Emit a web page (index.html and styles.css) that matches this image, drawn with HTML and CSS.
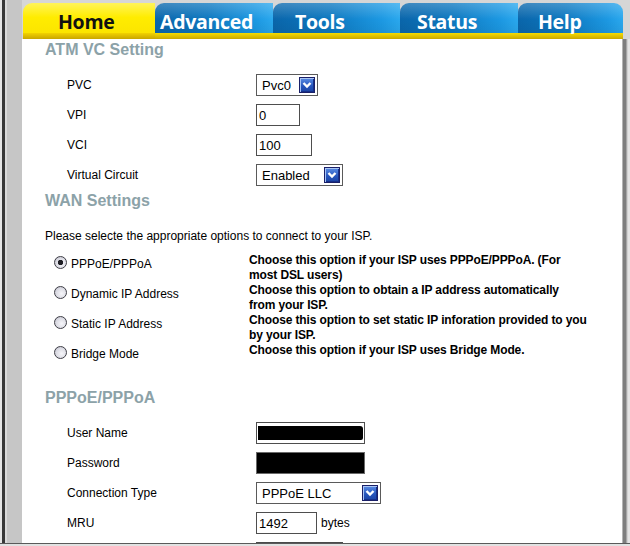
FILE: index.html
```html
<!DOCTYPE html>
<html>
<head>
<meta charset="utf-8">
<title>ADSL Router - Home</title>
<link rel="stylesheet" href="styles.css">
</head>
<body>
<div class="frame">
  <div class="left-rail"></div>
  <div class="main">
    <nav class="tabs">
      <div class="tab tab-home">Home</div>
      <div class="tab tab-advanced">Advanced</div>
      <div class="tab tab-tools">Tools</div>
      <div class="tab tab-status">Status</div>
      <div class="tab tab-help">Help</div>
    </nav>
    <div class="body-row">
      <main class="content">
        <h2 class="section-title first">ATM VC Setting</h2>
        <div class="fields">
          <div class="field-row">
            <span class="field-label">PVC</span>
            <span class="select w-pvc"><span class="select-text">Pvc0</span><span class="arrow"><svg width="12" height="12" viewBox="0 0 12 12"><path d="M2.5 4 L6 7.5 L9.5 4" fill="none" stroke="#fff" stroke-width="2.4"/></svg></span></span>
          </div>
          <div class="field-row">
            <span class="field-label">VPI</span>
            <span class="input w-vpi">0</span>
          </div>
          <div class="field-row">
            <span class="field-label">VCI</span>
            <span class="input w-vci">100</span>
          </div>
          <div class="field-row">
            <span class="field-label">Virtual Circuit</span>
            <span class="select w-vc"><span class="select-text">Enabled</span><span class="arrow"><svg width="12" height="12" viewBox="0 0 12 12"><path d="M2.5 4 L6 7.5 L9.5 4" fill="none" stroke="#fff" stroke-width="2.4"/></svg></span></span>
          </div>
        </div>

        <h2 class="section-title wan">WAN Settings</h2>
        <p class="intro">Please selecte the appropriate options to connect to your ISP.</p>
        <div class="radio-rows">
          <div class="radio-row">
            <div class="radio-opt"><span class="radio checked"></span><span class="radio-label">PPPoE/PPPoA</span></div>
            <div class="desc">Choose this option if your ISP uses PPPoE/PPPoA. (For<br>most DSL users)</div>
          </div>
          <div class="radio-row">
            <div class="radio-opt"><span class="radio"></span><span class="radio-label">Dynamic IP Address</span></div>
            <div class="desc">Choose this option to obtain a IP address automatically<br>from your ISP.</div>
          </div>
          <div class="radio-row">
            <div class="radio-opt"><span class="radio"></span><span class="radio-label">Static IP Address</span></div>
            <div class="desc">Choose this option to set static IP inforation provided to you<br>by your ISP.</div>
          </div>
          <div class="radio-row">
            <div class="radio-opt"><span class="radio"></span><span class="radio-label">Bridge Mode</span></div>
            <div class="desc">Choose this option if your ISP uses Bridge Mode.</div>
          </div>
        </div>

        <h2 class="section-title pppoe">PPPoE/PPPoA</h2>
        <div class="fields">
          <div class="field-row">
            <span class="field-label">User Name</span>
            <span class="input w-user redacted-user"><span class="redact-bar"></span></span>
          </div>
          <div class="field-row">
            <span class="field-label">Password</span>
            <span class="input w-user redacted-pass"></span>
          </div>
          <div class="field-row">
            <span class="field-label">Connection Type</span>
            <span class="select w-conn"><span class="select-text">PPPoE LLC</span><span class="arrow"><svg width="12" height="12" viewBox="0 0 12 12"><path d="M2.5 4 L6 7.5 L9.5 4" fill="none" stroke="#fff" stroke-width="2.4"/></svg></span></span>
          </div>
          <div class="field-row">
            <span class="field-label">MRU</span>
            <span class="input w-mru">1492</span><span class="unit">bytes</span>
          </div>
          <div class="field-row">
            <span class="field-label"></span>
            <span class="input w-next"></span>
          </div>
        </div>
      </main>
      <div class="right-rail"></div>
    </div>
  </div>
</div>
<div class="bottom"></div>
</body>
</html>
```

FILE: styles.css
```css
* { box-sizing: border-box; }
html, body { margin: 0; padding: 0; }
body {
  width: 630px;
  height: 546px;
  overflow: hidden;
  background: #d6d6d6;
  font-family: "Liberation Sans", Arial, sans-serif;
  font-size: 12px;
  color: #000;
}
.frame { display: flex; height: 543px; }
.left-rail {
  width: 22px;
  flex: none;
  background: linear-gradient(to right, #e6e6e6 0 2px, #383838 2px 5px, #dadada 5px 7px, #c6c6c6 7px 22px);
}
.main { width: 608px; display: flex; flex-direction: column; }

.tabs { display: flex; margin: 3px 0 0 1px; width: 600px; height: 36px; flex: none; }
.tab {
  height: 36px;
  padding-top: 1px;
  font-family: "Open Sans", "DejaVu Sans", sans-serif;
  font-weight: 700;
  font-size: 19.5px;
  line-height: 36px;
  letter-spacing: -0.3px;
  color: #fff;
  border-top-left-radius: 9px;
  background:
    linear-gradient(#f6dc00, #c9a800) bottom / 100% 6px no-repeat,
    linear-gradient(to bottom, rgba(255,255,255,0.22), rgba(255,255,255,0) 45%, rgba(0,0,0,0.08)),
    linear-gradient(to right, #0a66ab, #0d78c0 45%, #1c98e2 85%, #2aa8ee);
  white-space: nowrap;
}
.tab-home {
  width: 132px; padding-left: 35px; color: #111;
  background:
    linear-gradient(#f2d200, #c9a600) bottom / 100% 6px no-repeat,
    linear-gradient(to bottom, #fff45a, #ffec00 40%, #fae200);
}
.tab-advanced { width: 118px; padding-left: 5px; }
.tab-tools { width: 127px; padding-left: 22px; }
.tab-status { width: 118px; padding-left: 17px; }
.tab-help { width: 105px; padding-left: 20px; border-top-right-radius: 9px; }

.body-row { display: flex; height: 504px; }
.content { width: 600px; height: 504px; background: #fff; overflow: hidden; flex: none; }
.right-rail {
  width: 8px;
  flex: none;
  background: linear-gradient(to right, #b4b4b4 0 1px, #7e7e7e 1px 4px, #a6a6a6 4px 5px, #d2d2d2 5px 6px, #e4e4e4 6px);
}
.bottom { height: 3px; border-top: 1px solid #5a5a5a; background: #e2e2e2; }

.section-title {
  margin: 0 0 10px 23px;
  font-size: 16px;
  font-weight: bold;
  line-height: 20px;
  color: #8ca2a8;
}
.section-title.first { margin-top: 1px; }
.section-title.wan { margin-top: 1px; margin-bottom: 0; }
.section-title.pppoe { margin-top: 23px; }

.fields { margin-left: 23px; }
.field-row { display: flex; align-items: center; height: 30px; }
.field-label { width: 211px; padding-left: 22px; flex: none; }

.input {
  display: inline-flex;
  align-items: center;
  height: 22px;
  border: 1px solid #4e4e4e;
  padding: 0 2px;
  font-size: 13px;
  background: #fff;
}
.w-vpi { width: 44px; }
.w-vci { width: 56px; }
.w-mru { width: 61px; }
.w-user { width: 109px; }
.w-next { width: 87px; border-top: 2px solid #4a4a4a; }
.unit { margin-left: 4px; }
.redacted-user { padding: 3px 1px 3px 1px; align-items: stretch; }
.redact-bar { flex: 1; background: #000; border-radius: 0 3px 2px 0; }
.redacted-pass { background: #000; border-color: #6a6a6a; }

.select {
  display: inline-flex;
  align-items: center;
  justify-content: space-between;
  height: 22px;
  border: 1px solid #5a5a5a;
  padding: 0 2px 0 5px;
  font-size: 13px;
  background: #fff;
}
.w-pvc { width: 62px; }
.w-vc { width: 87px; }
.w-conn { width: 125px; }
.arrow {
  width: 16px;
  height: 16px;
  display: flex;
  align-items: center;
  justify-content: center;
  border: 1px solid #1a2068;
  background: linear-gradient(to bottom, #5a8de4, #2554bc 60%, #1c44a4);
  box-shadow: inset 1px 1px 0 #a8c4f4, inset -1px -1px 0 #16308a;
}

.intro { margin: 18px 0 0 23px; line-height: 14px; }
.radio-rows { margin: 2px 0 0 23px; }
.radio-row { display: flex; height: 30px; }
.radio-opt {
  width: 204px;
  flex: none;
  display: flex;
  align-items: flex-start;
  padding: 11px 0 0 9px;
}
.radio {
  width: 13px;
  height: 13px;
  flex: none;
  border-radius: 50%;
  border: 1px solid #3e3e46;
  background: radial-gradient(circle at 60% 60%, #f6f6fa 0, #dcdce4 55%, #b8b8c6 100%);
}
.radio.checked {
  background:
    radial-gradient(circle, #1e1e24 0 2.4px, rgba(0,0,0,0) 3px),
    radial-gradient(circle at 60% 60%, #f6f6fa 0, #dcdce4 55%, #b8b8c6 100%);
}
.radio-label { margin: 1px 0 0 4px; line-height: 14px; white-space: nowrap; }
.desc {
  padding-top: 8px;
  font-weight: bold;
  line-height: 15px;
  white-space: nowrap;
  letter-spacing: -0.12px;
}
```
